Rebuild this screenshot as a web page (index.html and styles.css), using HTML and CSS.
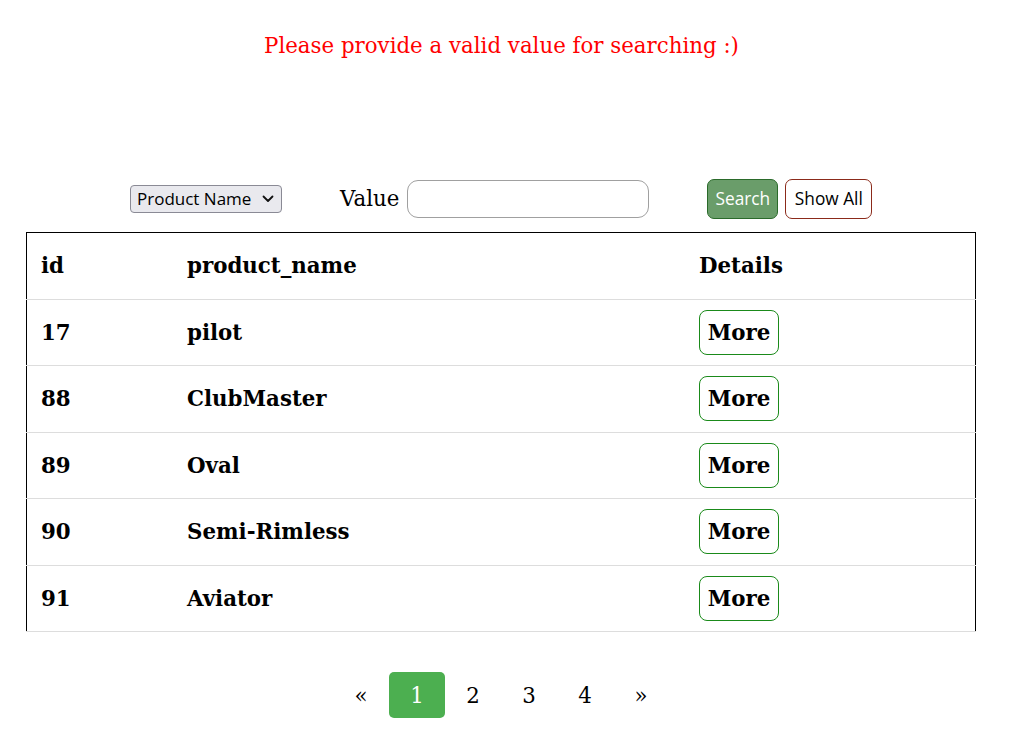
FILE: index.html
```html
<!DOCTYPE html>
<html>
<head>
<meta charset="utf-8">
<link rel="stylesheet" href="styles.css">
</head>
<body>
<p class="error">Please provide a valid value for searching :)</p>
<form class="search">
  <span class="select-wrap">
    <select class="field-select">
      <option>Product Name</option>
    </select>
    <svg class="chev" width="12" height="8" viewBox="0 0 12 8"><path d="M1.5 1.5 L6 6 L10.5 1.5" fill="none" stroke="#111" stroke-width="1.8" stroke-linecap="round" stroke-linejoin="round"/></svg>
  </span>
  <label class="value-label">Value</label>
  <input class="value-input" type="text">
  <button type="button" class="btn-search">Search</button>
  <button type="button" class="btn-all">Show All</button>
</form>
<table class="products">
  <thead>
    <tr><th class="c-id">id</th><th class="c-name">product_name</th><th class="c-det">Details</th></tr>
  </thead>
  <tbody>
    <tr><td>17</td><td>pilot</td><td><button class="more">More</button></td></tr>
    <tr><td>88</td><td>ClubMaster</td><td><button class="more">More</button></td></tr>
    <tr><td>89</td><td>Oval</td><td><button class="more">More</button></td></tr>
    <tr><td>90</td><td>Semi-Rimless</td><td><button class="more">More</button></td></tr>
    <tr><td>91</td><td>Aviator</td><td><button class="more">More</button></td></tr>
  </tbody>
</table>
<div class="pagination">
  <a>&laquo;</a><a class="active">1</a><a>2</a><a>3</a><a>4</a><a>&raquo;</a>
</div>
</body>
</html>
```
FILE: styles.css
```css
html, body { margin: 0; padding: 0; background: #fff; }
body { font-family: "DejaVu Serif", serif; color: #000; }

.error {
  margin: 0;
  padding-top: 33px;
  padding-right: 6px;
  height: 173px;
  box-sizing: border-box;
  text-align: center;
  color: #ff0000;
  font-size: 21.33px;
  line-height: 26px;
}

.search {
  display: flex;
  align-items: center;
  height: 51px;
  padding-left: 130px;
  margin-bottom: 8px;
}
.select-wrap {
  position: relative;
  display: inline-flex;
}
.field-select {
  appearance: none;
  -webkit-appearance: none;
  font-family: "Open Sans", sans-serif;
  font-size: 17px;
  height: 28px;
  width: 152px;
  border: 1px solid #8a8a95;
  border-radius: 4px;
  background: #e9e9ee;
  color: #000;
  padding: 0 0 0 6px;
}
.chev {
  position: absolute;
  right: 8px;
  top: 10px;
  pointer-events: none;
}
.value-label {
  margin-left: 58px;
  font-size: 21.33px;
}
.value-input {
  margin-left: 8px;
  width: 242px;
  height: 38px;
  box-sizing: border-box;
  border: 1px solid #a0a0a0;
  border-radius: 11px;
}
.btn-search, .btn-all {
  font-family: "Open Sans", sans-serif;
  font-size: 17.3px;
  height: 40px;
  box-sizing: border-box;
  border-radius: 7px;
  padding: 0;
}
.btn-search {
  margin-left: 58px;
  background: #6a9d6a;
  border: 1px solid #2a6a2a;
  color: #fff;
  width: 71px;
}
.btn-all {
  margin-left: 7px;
  background: #fff;
  border: 1px solid #8b2a1a;
  color: #000;
  width: 87px;
}

.products {
  margin-left: 26px;
  width: 950px;
  border-collapse: collapse;
  border-top: 1px solid #000;
  border-left: 1px solid #000;
  border-right: 1px solid #000;
}
.products th, .products td {
  text-align: left;
  font-weight: bold;
  font-size: 21.33px;
  padding: 0 14px;
  height: 65.5px;
  border-bottom: 1px solid #ddd;
  vertical-align: middle;
}
.c-id { width: 118px; }
.c-name { width: 484px; }
.more {
  font-family: "DejaVu Serif", serif;
  font-weight: bold;
  font-size: 21.33px;
  width: 80px;
  height: 45px;
  background: #fff;
  border: 1px solid #1a8a1a;
  border-radius: 8px;
  color: #000;
  padding: 0;
}

.pagination {
  display: flex;
  justify-content: center;
  margin-top: 40px;
  padding-right: 7px;
}
.pagination a {
  width: 56px;
  height: 46px;
  display: flex;
  align-items: center;
  justify-content: center;
  font-size: 21.33px;
  color: #000;
  border-radius: 5px;
}
.pagination a.active {
  background: #4caf50;
  color: #fff;
}
```
